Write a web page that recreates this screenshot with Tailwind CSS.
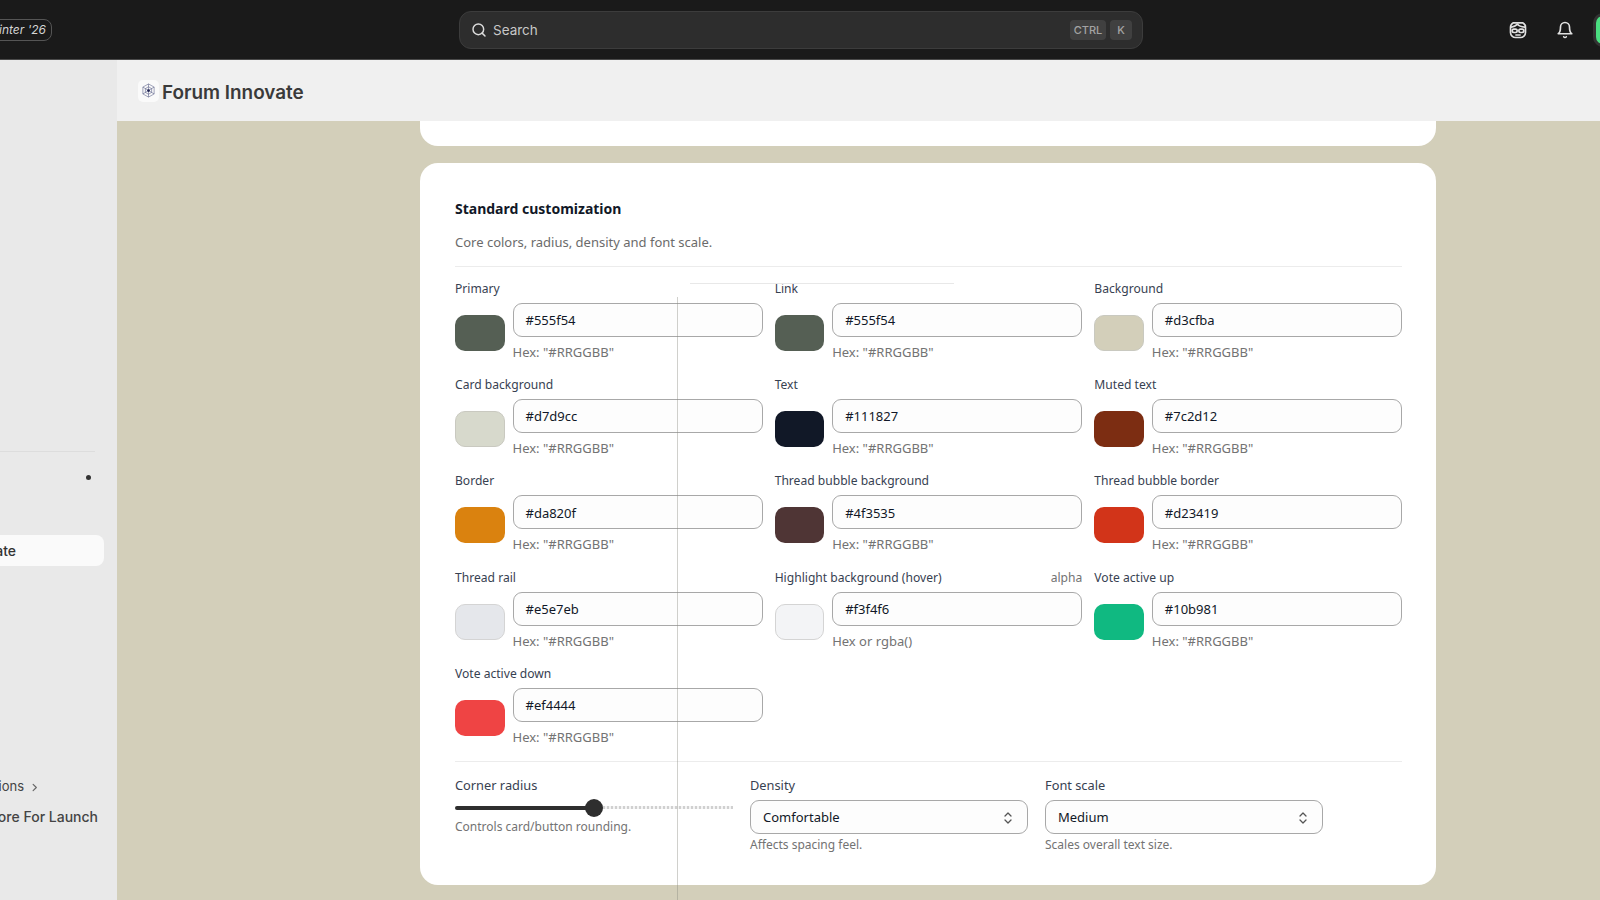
<!DOCTYPE html>
<html lang="en">
<head>
    <meta charset="UTF-8">
    <meta name="viewport" content="width=device-width, initial-scale=1.0">
    <title>Forum Innovate - Customization</title>
    <script src="https://cdn.jsdelivr.net/npm/@tailwindcss/browser@4"></script>
</head>
<body class="relative h-[900px] w-[1600px] overflow-hidden bg-[#d3cfba] font-['Noto_Sans',sans-serif] text-[#111827]">

    <!-- top bar -->
    <header class="flex h-[60px] items-center border-b border-[#4a4a4a] bg-[#1a1a1a] font-['Inter',sans-serif]">
        <div class="flex h-full w-[459px] shrink-0 items-center overflow-hidden">
            <div class="ml-[-26px] flex h-[22px] w-[78px] items-center justify-end rounded-[8px] border border-[#555] pr-[5px] pt-[1px] text-[12px] italic text-[#d4d4d4]">Winter '26</div>
        </div>
        <div class="flex h-[38px] w-[684px] shrink-0 items-center rounded-[12px] border border-[#3c3c3c] bg-[#2d2d2d] pl-[11px] pr-[10px] pt-[1px]">
            <svg class="h-[16px] w-[16px] text-[#dcdcdc]" viewBox="0 0 24 24" fill="none" stroke="currentColor" stroke-width="2.2" stroke-linecap="round"><circle cx="11" cy="11" r="8"/><path d="m21 21-4.3-4.3"/></svg>
            <span class="ml-[6px] text-[13.500px] text-[#c8c8c8]">Search</span>
            <span class="ml-auto flex h-[20px] w-[36px] items-center justify-center rounded-[4px] bg-[#404040] text-[11px] font-medium text-[#a3a3a3]">CTRL</span>
            <span class="ml-[4px] flex h-[20px] w-[22px] items-center justify-center rounded-[4px] bg-[#404040] text-[11px] font-medium text-[#a3a3a3]">K</span>
        </div>
        <div class="flex items-center">
            <svg class="ml-[365px] h-[20px] w-[20px] text-[#e0e0e0]" viewBox="0 0 24 24" fill="none" stroke="currentColor" stroke-width="2" stroke-linecap="round" stroke-linejoin="round"><path d="M6 3.500h12c1.800 1 3 3 3 5.500v6c0 3.500-3 6-6 6H9c-3 0-6-2.500-6-6V9c0-2.500 1.200-4.500 3-5.500z"/><path d="M4 8.500c4-.5 6-2 7.500-3.500 1.500 2 4 3 8.500 3.500"/><rect x="5" y="11" width="6" height="4" rx="2"/><rect x="13" y="11" width="6" height="4" rx="2"/><path d="M9.500 18h5"/></svg>
            <svg class="ml-[28px] h-[18px] w-[18px] text-[#e0e0e0]" viewBox="0 0 24 24" fill="none" stroke="currentColor" stroke-width="2.200" stroke-linecap="round" stroke-linejoin="round"><path d="M6 8a6 6 0 0 1 12 0c0 7 3 9 3 9H3s3-2 3-9"/><path d="M10.300 21a1.900 1.900 0 0 0 3.400 0"/></svg>
            <div class="ml-[19px] h-[34px] w-[20px] shrink-0 rounded-l-[10px] border-[3px] border-[#333] bg-[#4ade80]"></div>
        </div>
    </header>

    <div class="flex h-[840px]">
        <!-- sidebar, cut off at the left edge -->
        <aside class="w-[117px] shrink-0 overflow-hidden bg-[#e9e9e9] font-['Inter',sans-serif] text-[14px] text-[#333]">
            <div class="mt-[391px] h-px w-[95px] bg-[#dddddd]"></div>
            <div class="ml-[86px] mt-[23px] h-[5px] w-[5px] rounded-full bg-[#333]"></div>
            <div class="mt-[55px] flex h-[31px] w-[104px] items-center justify-end rounded-r-[8px] bg-[#fafafa] pr-[88px] text-[14px] font-medium">
                <span class="whitespace-nowrap">Innovate</span>
            </div>
            <div class="mt-[211px] flex h-[20px] w-[40px] items-center justify-end text-[13px] text-[#444]">
                <span class="whitespace-nowrap">Collections</span>
                <svg class="ml-[5px] h-[11px] w-[11px] shrink-0 text-[#666]" viewBox="0 0 24 24" fill="none" stroke="currentColor" stroke-width="2.500" stroke-linecap="round" stroke-linejoin="round"><path d="m9 5 7 7-7 7"/></svg>
            </div>
            <div class="mt-[9px] flex h-[20px] w-[98px] items-center justify-end font-medium text-[#444]">
                <span class="whitespace-nowrap">Before For Launch</span>
            </div>
        </aside>

        <div class="flex min-w-0 flex-1 flex-col">
            <!-- forum title -->
            <div class="flex h-[61px] shrink-0 items-center bg-[#f0f0f0] pl-[21px] font-['Inter',sans-serif]">
                <div class="flex h-[22px] w-[21px] items-center justify-center rounded-[5px] bg-[#fafafa]">
                    <svg class="h-[15px] w-[15px]" viewBox="0 0 24 24" fill="none" stroke="#5a5f88" stroke-width="0.900"><path d="M12 1.500 21 6.500v11L12 22.500 3 17.500v-11z"/><path d="M12 1.500V22.500M3 6.500l18 11M21 6.500l-18 11"/><path d="M12 6 17 9v6l-5 3-5-3V9z"/><circle cx="12" cy="12" r="2.200" fill="#1e2250" stroke="none"/></svg>
                </div>
                <span class="ml-[3px] pt-[5px] text-[18.900px] font-semibold text-[#3a3a3a]">Forum Innovate</span>
            </div>

            <!-- settings column -->
            <main class="flex-1 overflow-hidden pl-[303px]">
                <div class="h-[25px] w-[1016px] rounded-b-[18px] bg-white"></div>

                <section class="mt-[17px] h-[722px] w-[1016px] rounded-[18px] bg-white pl-[35px] pr-[34px] pt-[34px]">
                    <h2 class="h-[22px] pt-[1px] text-[14px] font-bold leading-[22px]">Standard customization</h2>
                    <p class="mt-[13px] border-b border-[#ececec] pb-[14px] text-[13px] leading-[20px] text-[#6b6b6b]">Core colors, radius, density and font scale.</p>

                    <div class="mt-[12px] grid grid-cols-3 gap-x-3 gap-y-[13.200px]">
                        <div>
                            <div class="h-[20px] text-[12.100px] leading-[20px] text-[#374151]">Primary</div>
                            <div class="mt-1 flex items-center gap-2">
                                <div class="mt-[1px] h-[36px] w-[49.500px] shrink-0 rounded-[10px] bg-[#555f54]"></div>
                                <div class="min-w-0 flex-1">
                                    <div class="flex h-[34px] items-center rounded-[9px] border border-[#a8a8a8] bg-[#fdfdfd] px-[12px] pt-[2px] text-[13px]">#555f54</div>
                                    <div class="mt-[5px] text-[13px] leading-[20px] text-[#737373]">Hex: "#RRGGBB"</div>
                                </div>
                            </div>
                        </div>
                        <div>
                            <div class="h-[20px] text-[12.100px] leading-[20px] text-[#374151]">Link</div>
                            <div class="mt-1 flex items-center gap-2">
                                <div class="mt-[1px] h-[36px] w-[49.500px] shrink-0 rounded-[10px] bg-[#555f54]"></div>
                                <div class="min-w-0 flex-1">
                                    <div class="flex h-[34px] items-center rounded-[9px] border border-[#a8a8a8] bg-[#fdfdfd] px-[12px] pt-[2px] text-[13px]">#555f54</div>
                                    <div class="mt-[5px] text-[13px] leading-[20px] text-[#737373]">Hex: "#RRGGBB"</div>
                                </div>
                            </div>
                        </div>
                        <div>
                            <div class="h-[20px] text-[12.100px] leading-[20px] text-[#374151]">Background</div>
                            <div class="mt-1 flex items-center gap-2">
                                <div class="mt-[1px] h-[36px] w-[49.500px] shrink-0 rounded-[10px] border border-[#c9c9c0] bg-[#d3cfba]"></div>
                                <div class="min-w-0 flex-1">
                                    <div class="flex h-[34px] items-center rounded-[9px] border border-[#a8a8a8] bg-[#fdfdfd] px-[12px] pt-[2px] text-[13px]">#d3cfba</div>
                                    <div class="mt-[5px] text-[13px] leading-[20px] text-[#737373]">Hex: "#RRGGBB"</div>
                                </div>
                            </div>
                        </div>

                        <div>
                            <div class="h-[20px] text-[12.100px] leading-[20px] text-[#374151]">Card background</div>
                            <div class="mt-1 flex items-center gap-2">
                                <div class="mt-[1px] h-[36px] w-[49.500px] shrink-0 rounded-[10px] border border-[#c9c9c0] bg-[#d7d9cc]"></div>
                                <div class="min-w-0 flex-1">
                                    <div class="flex h-[34px] items-center rounded-[9px] border border-[#a8a8a8] bg-[#fdfdfd] px-[12px] pt-[2px] text-[13px]">#d7d9cc</div>
                                    <div class="mt-[5px] text-[13px] leading-[20px] text-[#737373]">Hex: "#RRGGBB"</div>
                                </div>
                            </div>
                        </div>
                        <div>
                            <div class="h-[20px] text-[12.100px] leading-[20px] text-[#374151]">Text</div>
                            <div class="mt-1 flex items-center gap-2">
                                <div class="mt-[1px] h-[36px] w-[49.500px] shrink-0 rounded-[10px] bg-[#111827]"></div>
                                <div class="min-w-0 flex-1">
                                    <div class="flex h-[34px] items-center rounded-[9px] border border-[#a8a8a8] bg-[#fdfdfd] px-[12px] pt-[2px] text-[13px]">#111827</div>
                                    <div class="mt-[5px] text-[13px] leading-[20px] text-[#737373]">Hex: "#RRGGBB"</div>
                                </div>
                            </div>
                        </div>
                        <div>
                            <div class="h-[20px] text-[12.100px] leading-[20px] text-[#374151]">Muted text</div>
                            <div class="mt-1 flex items-center gap-2">
                                <div class="mt-[1px] h-[36px] w-[49.500px] shrink-0 rounded-[10px] bg-[#7c2d12]"></div>
                                <div class="min-w-0 flex-1">
                                    <div class="flex h-[34px] items-center rounded-[9px] border border-[#a8a8a8] bg-[#fdfdfd] px-[12px] pt-[2px] text-[13px]">#7c2d12</div>
                                    <div class="mt-[5px] text-[13px] leading-[20px] text-[#737373]">Hex: "#RRGGBB"</div>
                                </div>
                            </div>
                        </div>

                        <div>
                            <div class="h-[20px] text-[12.100px] leading-[20px] text-[#374151]">Border</div>
                            <div class="mt-1 flex items-center gap-2">
                                <div class="mt-[1px] h-[36px] w-[49.500px] shrink-0 rounded-[10px] bg-[#da820f]"></div>
                                <div class="min-w-0 flex-1">
                                    <div class="flex h-[34px] items-center rounded-[9px] border border-[#a8a8a8] bg-[#fdfdfd] px-[12px] pt-[2px] text-[13px]">#da820f</div>
                                    <div class="mt-[5px] text-[13px] leading-[20px] text-[#737373]">Hex: "#RRGGBB"</div>
                                </div>
                            </div>
                        </div>
                        <div>
                            <div class="h-[20px] text-[12.100px] leading-[20px] text-[#374151]">Thread bubble background</div>
                            <div class="mt-1 flex items-center gap-2">
                                <div class="mt-[1px] h-[36px] w-[49.500px] shrink-0 rounded-[10px] bg-[#4f3535]"></div>
                                <div class="min-w-0 flex-1">
                                    <div class="flex h-[34px] items-center rounded-[9px] border border-[#a8a8a8] bg-[#fdfdfd] px-[12px] pt-[2px] text-[13px]">#4f3535</div>
                                    <div class="mt-[5px] text-[13px] leading-[20px] text-[#737373]">Hex: "#RRGGBB"</div>
                                </div>
                            </div>
                        </div>
                        <div>
                            <div class="h-[20px] text-[12.100px] leading-[20px] text-[#374151]">Thread bubble border</div>
                            <div class="mt-1 flex items-center gap-2">
                                <div class="mt-[1px] h-[36px] w-[49.500px] shrink-0 rounded-[10px] bg-[#d23419]"></div>
                                <div class="min-w-0 flex-1">
                                    <div class="flex h-[34px] items-center rounded-[9px] border border-[#a8a8a8] bg-[#fdfdfd] px-[12px] pt-[2px] text-[13px]">#d23419</div>
                                    <div class="mt-[5px] text-[13px] leading-[20px] text-[#737373]">Hex: "#RRGGBB"</div>
                                </div>
                            </div>
                        </div>

                        <div>
                            <div class="h-[20px] text-[12.100px] leading-[20px] text-[#374151]">Thread rail</div>
                            <div class="mt-1 flex items-center gap-2">
                                <div class="mt-[1px] h-[36px] w-[49.500px] shrink-0 rounded-[10px] border border-[#d4d4d4] bg-[#e5e7eb]"></div>
                                <div class="min-w-0 flex-1">
                                    <div class="flex h-[34px] items-center rounded-[9px] border border-[#a8a8a8] bg-[#fdfdfd] px-[12px] pt-[2px] text-[13px]">#e5e7eb</div>
                                    <div class="mt-[5px] text-[13px] leading-[20px] text-[#737373]">Hex: "#RRGGBB"</div>
                                </div>
                            </div>
                        </div>
                        <div>
                            <div class="flex h-[20px] justify-between text-[12.100px] leading-[20px] text-[#374151]">
                                <span>Highlight background (hover)</span>
                                <span class="text-[#737373]">alpha</span>
                            </div>
                            <div class="mt-1 flex items-center gap-2">
                                <div class="mt-[1px] h-[36px] w-[49.500px] shrink-0 rounded-[10px] border border-[#d4d4d4] bg-[#f3f4f6]"></div>
                                <div class="min-w-0 flex-1">
                                    <div class="flex h-[34px] items-center rounded-[9px] border border-[#a8a8a8] bg-[#fdfdfd] px-[12px] pt-[2px] text-[13px]">#f3f4f6</div>
                                    <div class="mt-[5px] text-[13px] leading-[20px] text-[#737373]">Hex or rgba()</div>
                                </div>
                            </div>
                        </div>
                        <div>
                            <div class="h-[20px] text-[12.100px] leading-[20px] text-[#374151]">Vote active up</div>
                            <div class="mt-1 flex items-center gap-2">
                                <div class="mt-[1px] h-[36px] w-[49.500px] shrink-0 rounded-[10px] bg-[#10b981]"></div>
                                <div class="min-w-0 flex-1">
                                    <div class="flex h-[34px] items-center rounded-[9px] border border-[#a8a8a8] bg-[#fdfdfd] px-[12px] pt-[2px] text-[13px]">#10b981</div>
                                    <div class="mt-[5px] text-[13px] leading-[20px] text-[#737373]">Hex: "#RRGGBB"</div>
                                </div>
                            </div>
                        </div>

                        <div>
                            <div class="h-[20px] text-[12.100px] leading-[20px] text-[#374151]">Vote active down</div>
                            <div class="mt-1 flex items-center gap-2">
                                <div class="mt-[1px] h-[36px] w-[49.500px] shrink-0 rounded-[10px] bg-[#ef4444]"></div>
                                <div class="min-w-0 flex-1">
                                    <div class="flex h-[34px] items-center rounded-[9px] border border-[#a8a8a8] bg-[#fdfdfd] px-[12px] pt-[2px] text-[13px]">#ef4444</div>
                                    <div class="mt-[5px] text-[13px] leading-[20px] text-[#737373]">Hex: "#RRGGBB"</div>
                                </div>
                            </div>
                        </div>
                    </div>

                    <div class="mt-[14px] grid grid-cols-[278px_278px_278px] gap-x-[17px] border-t border-[#ececec] pt-[13px]">
                        <div>
                            <div class="h-[20px] text-[12.800px] leading-[20px] text-[#374151]">Corner radius</div>
                            <div class="relative mt-[5px] flex h-[16px] items-center">
                                <div class="h-[4px] w-[140px] rounded-l-full bg-[#2e2e2e]"></div>
                                <div class="ml-[8px] h-[3px] flex-1 bg-[repeating-linear-gradient(90deg,#d0d0d0_0,#d0d0d0_2px,#f4f4f4_2px,#f4f4f4_4px)]"></div>
                                <div class="absolute left-[130px] top-[-1px] h-[18px] w-[18px] rounded-full bg-[#2e2e2e]"></div>
                            </div>
                            <div class="mt-[1px] text-[12px] leading-[20px] text-[#737373]">Controls card/button rounding.</div>
                        </div>
                        <div>
                            <div class="h-[20px] text-[12.800px] leading-[20px] text-[#374151]">Density</div>
                            <div class="mt-[5px] flex h-[34px] items-center justify-between rounded-[9px] border border-[#a8a8a8] bg-[#fdfdfd] pl-[12px] pr-[11px] pt-[2px] text-[13px]">
                                <span>Comfortable</span>
                                <svg class="h-[16px] w-[16px] text-[#555]" viewBox="0 0 16 16" fill="none" stroke="currentColor" stroke-width="1.300" stroke-linecap="round" stroke-linejoin="round"><path d="m5 6 3-3 3 3"/><path d="m5 10 3 3 3-3"/></svg>
                            </div>
                            <div class="mt-[1px] text-[12px] leading-[20px] text-[#737373]">Affects spacing feel.</div>
                        </div>
                        <div>
                            <div class="h-[20px] text-[12.800px] leading-[20px] text-[#374151]">Font scale</div>
                            <div class="mt-[5px] flex h-[34px] items-center justify-between rounded-[9px] border border-[#a8a8a8] bg-[#fdfdfd] pl-[12px] pr-[11px] pt-[2px] text-[13px]">
                                <span>Medium</span>
                                <svg class="h-[16px] w-[16px] text-[#555]" viewBox="0 0 16 16" fill="none" stroke="currentColor" stroke-width="1.300" stroke-linecap="round" stroke-linejoin="round"><path d="m5 6 3-3 3 3"/><path d="m5 10 3 3 3-3"/></svg>
                            </div>
                            <div class="mt-[1px] text-[12px] leading-[20px] text-[#737373]">Scales overall text size.</div>
                        </div>
                    </div>
                </section>
            </main>
        </div>
    </div>

    <!-- stray guide lines lying over the card -->
    <div class="absolute left-[677px] top-[297px] h-[603px] w-px bg-[#8a8a80]/40"></div>
    <div class="absolute left-[690px] top-[283px] h-px w-[264px] bg-[#e8e8e8]"></div>
</body>
</html>
